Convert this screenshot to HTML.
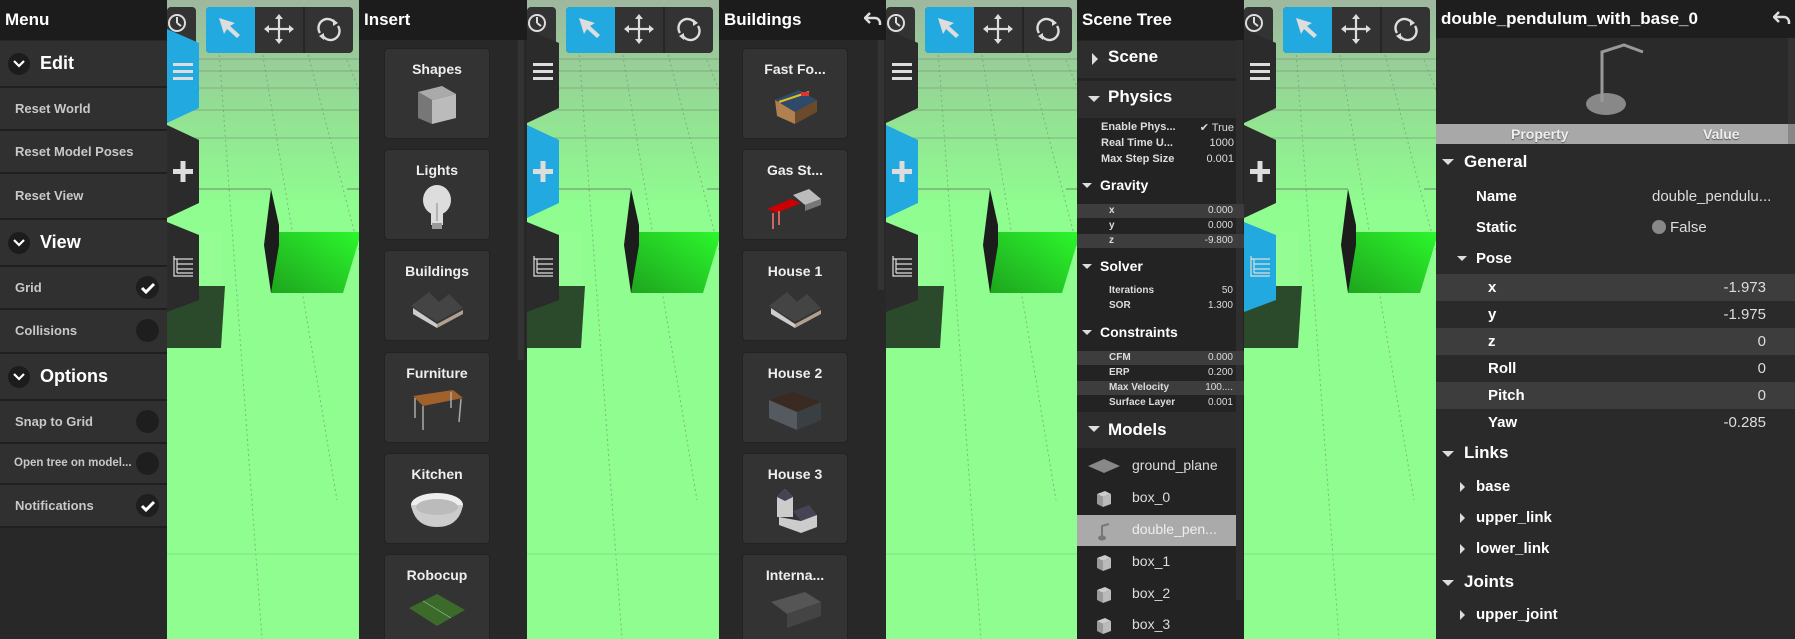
<!DOCTYPE html>
<html><head><meta charset="utf-8"><style>
*{margin:0;padding:0;box-sizing:border-box}
body{width:1795px;height:639px;overflow:hidden;background:#8ffd8f;font-family:"Liberation Sans",Arial,sans-serif;position:relative;color:#fff}
.abs{position:absolute}
.view{position:absolute;top:0;width:192px;height:639px;overflow:hidden}
.panel{position:absolute;top:0;height:639px;background:#282828;overflow:hidden}
.hdr{position:absolute;left:0;top:0;right:0;height:40px;background:#1c1c1c;font-weight:bold;font-size:17px;line-height:40px;padding-left:5px;color:#fff}
.row{position:absolute;left:0;right:0;background:#303030;border-bottom:2px solid #1f1f1f;color:#c8c8c8;font-weight:bold;font-size:13px;padding-left:15px}
.sec{position:absolute;left:0;right:0;background:#303030;border-bottom:2px solid #1f1f1f;font-weight:bold;font-size:18px;color:#fff;padding-left:40px}
.chev{position:absolute;left:8px;width:22px;height:22px;border-radius:50%;background:#1c1c1c}
.dot{position:absolute;left:136px;width:23px;height:23px;border-radius:50%;background:#1e1e1e}
.card{position:absolute;width:106px;height:91px;background:#333;border:1px solid #222;border-radius:4px;text-align:center;font-weight:bold;font-size:14px;color:#eee;padding-top:12px}
.card svg{display:block;margin:5px auto 0}
.st{position:absolute;font-weight:bold;color:#fff}
.sm{position:absolute;font-size:11px;font-weight:bold;color:#ddd}
.smv{position:absolute;font-size:11px;color:#ddd;text-align:right}
.hl{position:absolute;left:0;right:0;background:#3d3d3d}
.mi{position:absolute;left:55px;font-size:14px;color:#ddd}
.pl{position:absolute;font-size:15px;font-weight:bold;color:#fff}
.pv{position:absolute;font-size:15px;color:#ddd}
</style></head><body>

<!-- ============ GREEN VIEWS ============ -->
<svg width="0" height="0" style="position:absolute">
<defs>
<linearGradient id="sky" x1="0" y1="0" x2="0" y2="1"><stop offset="0" stop-color="#9fb79f"/><stop offset="0.5" stop-color="#94dc94"/><stop offset="1" stop-color="#8ffb8f"/></linearGradient>
<linearGradient id="bx" x1="0" y1="1" x2="1" y2="0"><stop offset="0" stop-color="#1ea51e"/><stop offset="1" stop-color="#2cf72c"/></linearGradient>
<g id="scene">
<rect width="192" height="639" fill="#8ffd8f"/>
<rect width="192" height="200" fill="url(#sky)"/>
<g stroke="#7a9a7a" stroke-width="1" opacity="0.7">
<line x1="0" y1="59" x2="192" y2="59"/><line x1="0" y1="71" x2="192" y2="71"/><line x1="0" y1="88" x2="192" y2="88"/><line x1="0" y1="110" x2="192" y2="110"/><line x1="0" y1="138" x2="192" y2="138"/>
</g>
<g stroke="#6f8f6f" stroke-width="1" stroke-dasharray="2,3" opacity="0.6">
<line x1="52" y1="50" x2="95" y2="639"/><line x1="95" y1="50" x2="170" y2="500"/><line x1="140" y1="50" x2="192" y2="250"/><line x1="180" y1="60" x2="192" y2="90"/>
</g>
<line x1="0" y1="189" x2="104" y2="189" stroke="#6a8a6a"/><line x1="180" y1="189" x2="192" y2="189" stroke="#6a8a6a"/>
<line x1="0" y1="554" x2="192" y2="554" stroke="#84e084"/>
<rect x="32" y="232" width="22" height="55" fill="#9aff9a" opacity="0.5"/>
<polygon points="0,286 58,286 54,348 0,348" fill="#2b4a2c"/>
<polygon points="106,232 192,232 192,240 176,293 104,293" fill="url(#bx)"/>
<polygon points="104,189 112,225 112,245 104,293 97,245" fill="#1c1c1c"/>
<rect x="0" y="7" width="29" height="44" rx="4" fill="#333"/>
<circle cx="10" cy="23" r="8" fill="none" stroke="#ddd" stroke-width="2"/><line x1="10" y1="17" x2="10" y2="23" stroke="#ddd" stroke-width="2"/><line x1="10" y1="23" x2="14" y2="26" stroke="#ddd" stroke-width="2"/>
<rect x="39" y="7" width="147" height="46" rx="4" fill="#333"/>
<path d="M39 11a4 4 0 0 1 4-4h45v46h-45a4 4 0 0 1-4-4z" fill="#22a9e0"/>
<line x1="137" y1="7" x2="137" y2="53" stroke="#262626" stroke-width="2"/>
<path d="M52 18 L68 23 L63 26 L73 35 L70 38 L60 29 L57 34 Z" fill="#ddd"/>
<g stroke="#ddd" stroke-width="2.2" fill="none"><line x1="100" y1="29" x2="124" y2="29"/><line x1="112" y1="17" x2="112" y2="41"/></g>
<g fill="#ddd"><path d="M112 14 l-4 5 h8z"/><path d="M112 44 l-4 -5 h8z"/><path d="M97 29 l5 -4 v8z"/><path d="M127 29 l-5 -4 v8z"/></g>
<path d="M153 33 a9 9 0 0 1 15 -10 M171 26 a9 9 0 0 1 -15 10" stroke="#ddd" stroke-width="2.4" fill="none"/>
<path d="M166 19 l5 4 l-5 3z M157 40 l-5 -4 l5 -3z" fill="#ddd"/>
</g>
<g id="icons">
<g fill="#ddd"><rect x="6" y="63" width="20" height="3"/><rect x="6" y="70" width="20" height="3"/><rect x="6" y="77" width="20" height="3"/>
<rect x="6" y="169" width="20" height="5"/><rect x="13.5" y="161" width="5" height="21"/></g>
<g stroke="#ddd" stroke-width="1.2" fill="none"><path d="M7 256 v20 h6 M7 259 h19 M10 259 v14 M10 264 h16 M10 269 h16 M10 273 h16 M13 276 h13"/></g>
</g>
</defs></svg>

<div class="view" style="left:167px"><svg width="192" height="639"><use href="#scene"/>
<polygon points="0,29 32,43 32,108 0,123" fill="#22a9e0"/><polygon points="0,125 32,140 32,203 0,218" fill="#2b2b2b"/><polygon points="0,222 32,235 32,300 0,312" fill="#2b2b2b"/><use href="#icons"/></svg></div>
<div class="view" style="left:527px"><svg width="192" height="639"><use href="#scene"/>
<polygon points="0,29 32,43 32,108 0,123" fill="#2b2b2b"/><polygon points="0,125 32,140 32,203 0,218" fill="#22a9e0"/><polygon points="0,222 32,235 32,300 0,312" fill="#2b2b2b"/><use href="#icons"/></svg></div>
<div class="view" style="left:886px"><svg width="192" height="639"><use href="#scene"/>
<polygon points="0,29 32,43 32,108 0,123" fill="#2b2b2b"/><polygon points="0,125 32,140 32,203 0,218" fill="#22a9e0"/><polygon points="0,222 32,235 32,300 0,312" fill="#2b2b2b"/><use href="#icons"/></svg></div>
<div class="view" style="left:1244px"><svg width="192" height="639"><use href="#scene"/>
<polygon points="0,29 32,43 32,108 0,123" fill="#2b2b2b"/><polygon points="0,125 32,140 32,203 0,218" fill="#2b2b2b"/><polygon points="0,222 32,235 32,300 0,312" fill="#22a9e0"/><use href="#icons"/></svg></div>

<!-- ============ MENU ============ -->
<div class="panel" style="left:0;width:167px">
<div class="hdr">Menu</div>
<div class="sec" style="top:41px;height:47px;line-height:45px"><span class="chev" style="top:12px"></span><svg class="abs" style="left:13px;top:19px" width="12" height="8"><path d="M1 1l5 5 5-5" stroke="#fff" stroke-width="2.2" fill="none"/></svg>Edit</div>
<div class="row" style="top:88px;height:43px;line-height:41px">Reset World</div>
<div class="row" style="top:131px;height:43px;line-height:41px">Reset Model Poses</div>
<div class="row" style="top:174px;height:46px;line-height:44px">Reset View</div>
<div class="sec" style="top:220px;height:47px;line-height:45px"><span class="chev" style="top:12px"></span><svg class="abs" style="left:13px;top:19px" width="12" height="8"><path d="M1 1l5 5 5-5" stroke="#fff" stroke-width="2.2" fill="none"/></svg>View</div>
<div class="row" style="top:267px;height:43px;line-height:41px">Grid<span class="dot" style="top:9px"></span><svg class="abs" style="left:140px;top:15px" width="16" height="12"><path d="M2 6l4 4 8-8" stroke="#fff" stroke-width="3" fill="none"/></svg></div>
<div class="row" style="top:310px;height:44px;line-height:42px">Collisions<span class="dot" style="top:9px"></span></div>
<div class="sec" style="top:354px;height:47px;line-height:45px"><span class="chev" style="top:12px"></span><svg class="abs" style="left:13px;top:19px" width="12" height="8"><path d="M1 1l5 5 5-5" stroke="#fff" stroke-width="2.2" fill="none"/></svg>Options</div>
<div class="row" style="top:401px;height:43px;line-height:41px">Snap to Grid<span class="dot" style="top:9px"></span></div>
<div class="row" style="top:444px;height:41px;line-height:39px;font-size:11.5px;padding-left:14px">Open tree on model...<span class="dot" style="top:8px"></span></div>
<div class="row" style="top:485px;height:43px;line-height:41px">Notifications<span class="dot" style="top:9px"></span><svg class="abs" style="left:140px;top:15px" width="16" height="12"><path d="M2 6l4 4 8-8" stroke="#fff" stroke-width="3" fill="none"/></svg></div>
</div>

<!-- ============ INSERT ============ -->
<div class="panel" style="left:359px;width:168px">
<div class="hdr">Insert</div>
<div class="abs" style="left:159px;top:40px;width:6px;height:320px;background:#333"></div>
<div class="card" style="left:25px;top:48px">Shapes<svg width="50" height="44"><polygon points="6,10 30,4 44,12 20,18" fill="#aaa"/><polygon points="6,10 20,18 20,42 6,36" fill="#777"/><polygon points="20,18 44,12 44,36 20,42" fill="#bbb"/></svg></div>
<div class="card" style="left:25px;top:149px">Lights<svg width="50" height="48"><ellipse cx="25" cy="17" rx="14" ry="15" fill="#ddd"/><rect x="19" y="26" width="12" height="16" fill="#ddd"/><rect x="20" y="40" width="10" height="6" fill="#999"/><line x1="25" y1="20" x2="25" y2="38" stroke="#888"/></svg></div>
<div class="card" style="left:25px;top:250px">Buildings<svg width="60" height="44"><polygon points="4,22 22,8 32,18 42,10 56,24 30,38" fill="#444"/><polygon points="6,24 30,40 30,44 6,30" fill="#ccc"/><polygon points="30,40 56,26 56,30 30,44" fill="#b0a090"/></svg></div>
<div class="card" style="left:25px;top:352px">Furniture<svg width="60" height="44"><polygon points="6,10 46,4 56,12 16,20" fill="#a0622a"/><g stroke="#aaa" stroke-width="1.5"><line x1="8" y1="12" x2="8" y2="32"/><line x1="16" y1="20" x2="16" y2="44"/><line x1="54" y1="13" x2="52" y2="36"/><line x1="44" y1="6" x2="44" y2="22"/></g></svg></div>
<div class="card" style="left:25px;top:453px">Kitchen<svg width="60" height="44"><ellipse cx="30" cy="18" rx="26" ry="12" fill="#eee"/><path d="M4 18 Q8 40 30 40 Q52 40 56 18 Z" fill="#ccc"/><ellipse cx="30" cy="20" rx="21" ry="8" fill="#bbb"/></svg></div>
<div class="card" style="left:25px;top:554px">Robocup<svg width="60" height="44"><polygon points="2,20 30,6 58,22 30,38" fill="#3c6a2a"/><g stroke="#8c8" stroke-width="0.7" fill="none"><line x1="16" y1="13" x2="44" y2="30"/></g></svg></div>
</div>

<!-- ============ BUILDINGS ============ -->
<div class="panel" style="left:719px;width:167px">
<div class="hdr">Buildings</div>
<svg class="abs" style="left:145px;top:11px" width="18" height="16"><path d="M6 2 L1 7 L6 12 M1 7 H11 a5 5 0 0 1 5 5 v2" stroke="#ddd" stroke-width="2.5" fill="none"/></svg>
<div class="abs" style="left:159px;top:40px;width:6px;height:250px;background:#333"></div>
<div class="card" style="left:23px;top:48px">Fast Fo...<svg width="60" height="44"><polygon points="10,18 34,8 52,18 30,30" fill="#2e4a6a"/><polygon points="10,18 30,30 30,42 12,34" fill="#b08050"/><polygon points="30,30 52,18 52,30 30,42" fill="#6a4a2a"/><line x1="14" y1="20" x2="44" y2="10" stroke="#e0c020" stroke-width="2"/><rect x="36" y="10" width="8" height="4" fill="#d33"/></svg></div>
<div class="card" style="left:23px;top:149px">Gas St...<svg width="60" height="48"><polygon points="28,12 44,6 56,16 40,22" fill="#bbb"/><polygon points="40,22 56,16 56,22 40,28" fill="#777"/><polygon points="2,26 26,16 36,20 12,30" fill="#c00"/><line x1="8" y1="30" x2="8" y2="46" stroke="#c66" stroke-width="2"/><line x1="14" y1="28" x2="14" y2="42" stroke="#c66" stroke-width="2"/></svg></div>
<div class="card" style="left:23px;top:250px">House 1<svg width="60" height="44"><polygon points="4,22 22,8 32,18 42,10 56,24 30,38" fill="#444"/><polygon points="6,24 30,40 30,44 6,30" fill="#ccc"/><polygon points="30,40 56,26 56,30 30,44" fill="#b0a090"/></svg></div>
<div class="card" style="left:23px;top:352px">House 2<svg width="60" height="48"><polygon points="4,14 28,6 56,16 32,26" fill="#3a2a22"/><polygon points="4,14 32,26 32,44 4,32" fill="#555a60"/><polygon points="32,26 56,16 56,34 32,44" fill="#3a3f44"/></svg></div>
<div class="card" style="left:23px;top:453px">House 3<svg width="60" height="48"><polygon points="12,10 20,2 28,10 28,30 12,30" fill="#ccc"/><polygon points="12,10 20,2 28,10 20,14" fill="#445"/><polygon points="28,24 44,18 52,28 36,34" fill="#445"/><polygon points="14,30 36,34 52,28 52,40 36,46 14,38" fill="#ccc"/></svg></div>
<div class="card" style="left:23px;top:554px">Interna...<svg width="60" height="44"><polygon points="6,14 40,4 56,14 22,26" fill="#555"/><polygon points="6,14 22,26 22,40 6,28" fill="#333"/><polygon points="22,26 56,14 56,28 22,40" fill="#444"/></svg></div>
</div>

<!-- ============ SCENE TREE ============ -->
<div class="panel" style="left:1077px;width:167px;background:#232323">
<div class="hdr">Scene Tree</div>
<div class="abs" style="left:159px;top:40px;width:7px;height:560px;background:#2e2e2e"></div>
<div class="abs" style="left:0;top:41px;width:159px;height:37px;background:#2d2d2d"></div>
<svg class="abs" style="left:14px;top:52px" width="8" height="14"><path d="M1 1 L7 7 L1 13z" fill="#ddd"/></svg>
<div class="st" style="left:31px;top:47px;font-size:17px">Scene</div>
<div class="abs" style="left:0;top:81px;width:159px;height:37px;background:#2d2d2d"></div>
<svg class="abs" style="left:10px;top:95px" width="14" height="8"><path d="M1 1 H13 L7 7z" fill="#ddd"/></svg>
<div class="st" style="left:31px;top:87px;font-size:17px">Physics</div>
<div class="sm" style="left:24px;top:121px">Enable Phys...</div><div class="smv" style="left:100px;top:121px;width:57px">&#10004;&#xFE0E; True</div>
<div class="sm" style="left:24px;top:137px">Real Time U...</div><div class="smv" style="left:100px;top:137px;width:57px">1000</div>
<div class="sm" style="left:24px;top:153px">Max Step Size</div><div class="smv" style="left:100px;top:153px;width:57px">0.001</div>
<svg class="abs" style="left:4px;top:182px" width="12" height="7"><path d="M1 1 H11 L6 6z" fill="#ddd"/></svg>
<div class="st" style="left:23px;top:177px;font-size:14px">Gravity</div>
<div class="hl" style="top:204px;height:14px"></div><div class="hl" style="top:234px;height:14px"></div>
<div class="sm" style="left:32px;top:205px;font-size:10px">x</div><div class="smv" style="left:100px;top:205px;width:56px;font-size:10px">0.000</div>
<div class="sm" style="left:32px;top:220px;font-size:10px">y</div><div class="smv" style="left:100px;top:220px;width:56px;font-size:10px">0.000</div>
<div class="sm" style="left:32px;top:235px;font-size:10px">z</div><div class="smv" style="left:100px;top:235px;width:56px;font-size:10px">-9.800</div>
<svg class="abs" style="left:4px;top:263px" width="12" height="7"><path d="M1 1 H11 L6 6z" fill="#ddd"/></svg>
<div class="st" style="left:23px;top:258px;font-size:14px">Solver</div>
<div class="sm" style="left:32px;top:285px;font-size:10px">Iterations</div><div class="smv" style="left:100px;top:285px;width:56px;font-size:10px">50</div>
<div class="sm" style="left:32px;top:300px;font-size:10px">SOR</div><div class="smv" style="left:100px;top:300px;width:56px;font-size:10px">1.300</div>
<svg class="abs" style="left:4px;top:329px" width="12" height="7"><path d="M1 1 H11 L6 6z" fill="#ddd"/></svg>
<div class="st" style="left:23px;top:324px;font-size:14px">Constraints</div>
<div class="hl" style="top:351px;height:14px"></div><div class="hl" style="top:381px;height:14px"></div>
<div class="sm" style="left:32px;top:352px;font-size:10px">CFM</div><div class="smv" style="left:100px;top:352px;width:56px;font-size:10px">0.000</div>
<div class="sm" style="left:32px;top:367px;font-size:10px">ERP</div><div class="smv" style="left:100px;top:367px;width:56px;font-size:10px">0.200</div>
<div class="sm" style="left:32px;top:382px;font-size:10px">Max Velocity</div><div class="smv" style="left:100px;top:382px;width:56px;font-size:10px">100....</div>
<div class="sm" style="left:32px;top:397px;font-size:10px">Surface Layer</div><div class="smv" style="left:100px;top:397px;width:56px;font-size:10px">0.001</div>
<div class="abs" style="left:0;top:412px;width:159px;height:36px;background:#2d2d2d"></div>
<svg class="abs" style="left:10px;top:425px" width="14" height="8"><path d="M1 1 H13 L7 7z" fill="#ddd"/></svg>
<div class="st" style="left:31px;top:420px;font-size:17px">Models</div>
<div class="abs" style="left:0;top:515px;width:159px;height:31px;background:#aaa"></div>
<svg class="abs" style="left:10px;top:458px" width="34" height="16"><polygon points="1,8 17,1 33,8 17,15" fill="#888"/></svg>
<div class="mi" style="top:457px">ground_plane</div>
<svg class="abs" style="left:18px;top:490px" width="18" height="18"><polygon points="2,4 10,1 16,4 8,7" fill="#ccc"/><polygon points="2,4 8,7 8,17 2,14" fill="#999"/><polygon points="8,7 16,4 16,14 8,17" fill="#bbb"/></svg>
<div class="mi" style="top:489px">box_0</div>
<svg class="abs" style="left:20px;top:521px" width="16" height="20"><path d="M5 18 V5 L12 3" stroke="#777" stroke-width="2" fill="none"/><ellipse cx="5" cy="17" rx="4" ry="2.5" fill="#777"/></svg>
<div class="mi" style="top:521px;color:#eee">double_pen...</div>
<svg class="abs" style="left:18px;top:554px" width="18" height="18"><polygon points="2,4 10,1 16,4 8,7" fill="#ccc"/><polygon points="2,4 8,7 8,17 2,14" fill="#999"/><polygon points="8,7 16,4 16,14 8,17" fill="#bbb"/></svg>
<div class="mi" style="top:553px">box_1</div>
<svg class="abs" style="left:18px;top:586px" width="18" height="18"><polygon points="2,4 10,1 16,4 8,7" fill="#ccc"/><polygon points="2,4 8,7 8,17 2,14" fill="#999"/><polygon points="8,7 16,4 16,14 8,17" fill="#bbb"/></svg>
<div class="mi" style="top:585px">box_2</div>
<svg class="abs" style="left:18px;top:617px" width="18" height="18"><polygon points="2,4 10,1 16,4 8,7" fill="#ccc"/><polygon points="2,4 8,7 8,17 2,14" fill="#999"/><polygon points="8,7 16,4 16,14 8,17" fill="#bbb"/></svg>
<div class="mi" style="top:616px">box_3</div>
</div>

<!-- ============ PROPERTIES ============ -->
<div class="panel" style="left:1436px;width:359px;background:#2a2a2a">
<div class="hdr" style="height:38px;line-height:38px;font-size:17px;background:#1e1e1e">double_pendulum_with_base_0</div>
<svg class="abs" style="left:337px;top:10px" width="18" height="16"><path d="M6 2 L1 7 L6 12 M1 7 H11 a5 5 0 0 1 5 5 v2" stroke="#ddd" stroke-width="2.5" fill="none"/></svg>
<div class="abs" style="left:352px;top:38px;width:7px;height:100px;background:#333"></div>
<svg class="abs" style="left:140px;top:40px" width="80" height="80"><ellipse cx="30" cy="64" rx="20" ry="11" fill="#888"/><path d="M26 62 V12 L48 5 L67 12" stroke="#999" stroke-width="3" fill="none"/></svg>
<div class="abs" style="left:0;top:124px;width:359px;height:20px;background:#a8a8a8"></div>
<div class="abs" style="left:352px;top:124px;width:7px;height:20px;background:#888"></div>
<div class="abs" style="left:75px;top:126px;font-size:14px;font-weight:bold;color:#eee;text-shadow:0 1px 1px #555">Property</div>
<div class="abs" style="left:267px;top:126px;font-size:14px;font-weight:bold;color:#eee;text-shadow:0 1px 1px #555">Value</div>
<svg class="abs" style="left:5px;top:158px" width="14" height="8"><path d="M1 1 H13 L7 7z" fill="#ddd"/></svg>
<div class="st" style="left:28px;top:152px;font-size:17px">General</div>
<div class="pl" style="left:40px;top:188px">Name</div><div class="pv" style="left:216px;top:188px">double_pendulu...</div>
<div class="pl" style="left:40px;top:219px">Static</div>
<div class="abs" style="left:216px;top:220px;width:14px;height:14px;border-radius:50%;background:#888"></div><div class="pv" style="left:234px;top:219px">False</div>
<svg class="abs" style="left:20px;top:255px" width="12" height="7"><path d="M1 1 H11 L6 6z" fill="#ddd"/></svg>
<div class="pl" style="left:40px;top:250px">Pose</div>
<div class="hl" style="top:274px;height:27px"></div><div class="hl" style="top:328px;height:27px"></div><div class="hl" style="top:382px;height:27px"></div>
<div class="pl" style="left:52px;top:279px">x</div><div class="pv" style="left:230px;top:279px;width:100px;text-align:right">-1.973</div>
<div class="pl" style="left:52px;top:306px">y</div><div class="pv" style="left:230px;top:306px;width:100px;text-align:right">-1.975</div>
<div class="pl" style="left:52px;top:333px">z</div><div class="pv" style="left:230px;top:333px;width:100px;text-align:right">0</div>
<div class="pl" style="left:52px;top:360px">Roll</div><div class="pv" style="left:230px;top:360px;width:100px;text-align:right">0</div>
<div class="pl" style="left:52px;top:387px">Pitch</div><div class="pv" style="left:230px;top:387px;width:100px;text-align:right">0</div>
<div class="pl" style="left:52px;top:414px">Yaw</div><div class="pv" style="left:230px;top:414px;width:100px;text-align:right">-0.285</div>
<svg class="abs" style="left:5px;top:450px" width="14" height="8"><path d="M1 1 H13 L7 7z" fill="#ddd"/></svg>
<div class="st" style="left:28px;top:443px;font-size:17px">Links</div>
<svg class="abs" style="left:23px;top:481px" width="7" height="12"><path d="M1 1 L6 6 L1 11z" fill="#ddd"/></svg><div class="pl" style="left:40px;top:478px">base</div>
<svg class="abs" style="left:23px;top:512px" width="7" height="12"><path d="M1 1 L6 6 L1 11z" fill="#ddd"/></svg><div class="pl" style="left:40px;top:509px">upper_link</div>
<svg class="abs" style="left:23px;top:543px" width="7" height="12"><path d="M1 1 L6 6 L1 11z" fill="#ddd"/></svg><div class="pl" style="left:40px;top:540px">lower_link</div>
<svg class="abs" style="left:5px;top:579px" width="14" height="8"><path d="M1 1 H13 L7 7z" fill="#ddd"/></svg>
<div class="st" style="left:28px;top:572px;font-size:17px">Joints</div>
<svg class="abs" style="left:23px;top:609px" width="7" height="12"><path d="M1 1 L6 6 L1 11z" fill="#ddd"/></svg><div class="pl" style="left:40px;top:606px">upper_joint</div>
</div>
</body></html>
